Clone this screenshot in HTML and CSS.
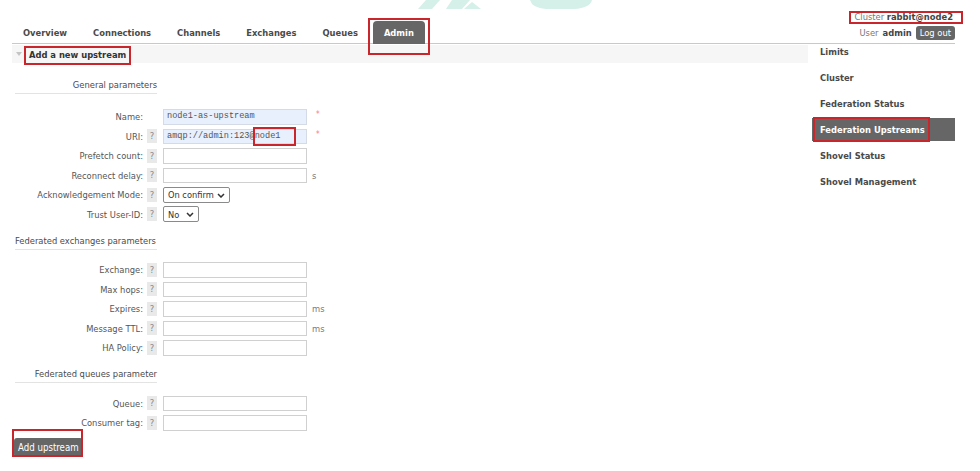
FILE: index.html
```html
<!DOCTYPE html>
<html lang="en">
<head>
<meta charset="utf-8">
<title>RabbitMQ Management - Admin</title>
<link rel="stylesheet" href="styles.css">
</head>
<body>
<div class="page">
  <header class="top">
    <nav class="tabs">
      <a class="tab">Overview</a>
      <a class="tab">Connections</a>
      <a class="tab">Channels</a>
      <a class="tab">Exchanges</a>
      <a class="tab">Queues</a>
      <a class="tab active">Admin</a>
    </nav>
    <div class="login">
      <div class="cluster">Cluster <b>rabbit@node2</b></div>
      <div class="user">User <b>admin</b> <button class="logout">Log out</button></div>
    </div>
  </header>

  <div class="main">
    <section class="content">
      <div class="band"><span class="tri"></span>Add a new upstream</div>
      <div class="form">
        <div class="heading">General parameters</div>
        <div class="row"><span class="label">Name:</span><span class="hcell"></span><span class="field"><span class="inp filled">node1-as-upstream</span><span class="req">*</span></span></div>
        <div class="row"><span class="label">URI:</span><span class="hcell"><span class="help">?</span></span><span class="field"><span class="inp filled">amqp://admin:123@node1</span><span class="req">*</span></span></div>
        <div class="row"><span class="label">Prefetch count:</span><span class="hcell"><span class="help">?</span></span><span class="field"><span class="inp"></span></span></div>
        <div class="row"><span class="label">Reconnect delay:</span><span class="hcell"><span class="help">?</span></span><span class="field"><span class="inp"></span><span class="unit">s</span></span></div>
        <div class="row"><span class="label">Acknowledgement Mode:</span><span class="hcell"><span class="help">?</span></span><span class="field"><span class="selwrap"><select class="sel sel-ack"><option>On confirm</option></select><svg class="chev" width="8" height="5" viewBox="0 0 8 5"><path d="M1 1 L4 4 L7 1" fill="none" stroke="#333" stroke-width="1.5"/></svg></span></span></div>
        <div class="row"><span class="label">Trust User-ID:</span><span class="hcell"><span class="help">?</span></span><span class="field"><span class="selwrap"><select class="sel sel-trust"><option>No</option></select><svg class="chev" width="8" height="5" viewBox="0 0 8 5"><path d="M1 1 L4 4 L7 1" fill="none" stroke="#333" stroke-width="1.5"/></svg></span></span></div>

        <div class="heading heading-ex">Federated exchanges parameters</div>
        <div class="row"><span class="label">Exchange:</span><span class="hcell"><span class="help">?</span></span><span class="field"><span class="inp"></span></span></div>
        <div class="row"><span class="label">Max hops:</span><span class="hcell"><span class="help">?</span></span><span class="field"><span class="inp"></span></span></div>
        <div class="row"><span class="label">Expires:</span><span class="hcell"><span class="help">?</span></span><span class="field"><span class="inp"></span><span class="unit">ms</span></span></div>
        <div class="row"><span class="label">Message TTL:</span><span class="hcell"><span class="help">?</span></span><span class="field"><span class="inp"></span><span class="unit">ms</span></span></div>
        <div class="row"><span class="label">HA Policy:</span><span class="hcell"><span class="help">?</span></span><span class="field"><span class="inp"></span></span></div>

        <div class="heading heading-q">Federated queues parameter</div>
        <div class="row"><span class="label">Queue:</span><span class="hcell"><span class="help">?</span></span><span class="field"><span class="inp"></span></span></div>
        <div class="row"><span class="label">Consumer tag:</span><span class="hcell"><span class="help">?</span></span><span class="field"><span class="inp"></span></span></div>
      </div>
      <button class="submit">Add upstream</button>
    </section>

    <aside class="side">
      <ul class="menu">
        <li><a>Limits</a></li>
        <li><a>Cluster</a></li>
        <li><a>Federation Status</a></li>
        <li class="sel-item"><a>Federation Upstreams</a></li>
        <li><a>Shovel Status</a></li>
        <li><a>Shovel Management</a></li>
      </ul>
    </aside>
  </div>

  <svg class="mark" width="200" height="12" viewBox="410 0 200 12" aria-hidden="true">
    <polygon points="426,0 440,0 432,9 418,9" fill="#d5efe9"/>
    <polygon points="452,0 470,0 462,9 446,9" fill="#d5efe9"/>
    <polygon points="472,2 481,9 464,9" fill="#d5efe9"/>
    <path d="M530 0 H592 Q590 8 574 9 H546 Q532 8 530 0 Z" fill="#d5efe9"/>
  </svg>

  <div class="anno a-cluster"></div>
  <div class="anno a-admin"></div>
  <div class="anno a-band"></div>
  <div class="anno a-uri"></div>
  <div class="anno a-fed"></div>
  <div class="anno a-btn"></div>
</div>
</body>
</html>
```

FILE: styles.css
```css
html, body {
  margin: 0;
  padding: 0;
  background: #fff;
}
body {
  font-family: "DejaVu Sans Condensed", "DejaVu Sans", sans-serif;
  font-stretch: condensed;
  font-size: 9.3px;
  color: #555;
}
.page {
  position: relative;
  width: 943px;
  height: 471px;
  padding: 0 25px 0 12px;
  overflow: hidden;
}

/* header */
.top {
  display: flex;
  justify-content: space-between;
  height: 43px;
  border-bottom: 1px solid #c9c9c9;
}
.tabs {
  display: flex;
  align-self: flex-end;
  margin-bottom: -1px;
}
.tab {
  display: block;
  height: 23px;
  line-height: 23px;
  padding: 0 11px;
  margin-right: 4px;
  font-weight: bold;
  color: #4a4a4a;
}
.tab.active {
  background: #666;
  color: #fff;
  border-radius: 4px 4px 0 0;
}
.login {
  padding-top: 10px;
  text-align: right;
}
.cluster {
  height: 14px;
  line-height: 14px;
  padding-right: 2px;
  color: #777;
}
.cluster b, .user b {
  color: #444;
}
.user {
  margin-top: 2px;
  height: 14px;
  line-height: 14px;
  display: flex;
  align-items: center;
  justify-content: flex-end;
  gap: 4px;
  color: #777;
}
.logout {
  font: inherit;
  height: 14px;
  padding: 0 4px;
  border: none;
  border-radius: 3px;
  background: #666;
  color: #fff;
  line-height: 14px;
}

/* main */
.main {
  display: flex;
}
.content {
  width: 796px;
}
.band {
  margin-top: 1px;
  height: 18px;
  background: #f6f6f6;
  display: flex;
  align-items: center;
  padding-left: 4px;
  font-weight: bold;
  color: #333;
}
.tri {
  width: 0;
  height: 0;
  border-left: 3px solid transparent;
  border-right: 3px solid transparent;
  border-top: 4px solid #c4c4c4;
  margin-right: 7px;
}
.form {
  padding-left: 3px;
}
.heading {
  width: 142px;
  line-height: 11px;
  padding-bottom: 3px;
  border-bottom: 1px solid #e3e3e3;
  text-align: right;
  white-space: nowrap;
  color: #4a4a4a;
  margin-top: 16px;
  margin-bottom: 13px;
}
.heading-ex {
  text-align: left;
  margin-top: 11px;
  margin-bottom: 10px;
}
.heading-q {
  margin-top: 10px;
  margin-bottom: 11px;
}
.row {
  display: grid;
  grid-template-columns: 128px 20px auto;
  align-items: center;
  height: 19.5px;
}
.label {
  text-align: right;
  white-space: nowrap;
  color: #555;
}
.hcell {
  display: flex;
  align-items: center;
}
.help {
  display: inline-block;
  margin-left: 4px;
  width: 10px;
  height: 14px;
  line-height: 14px;
  text-align: center;
  background: #e9e9e9;
  color: #888;
}
.field {
  display: flex;
  align-items: center;
}
.inp {
  box-sizing: border-box;
  width: 144px;
  height: 15.5px;
  border: 1px solid #d0d0d0;
  background: #fff;
  font-family: "Liberation Mono", "DejaVu Sans Mono", monospace;
  font-size: 8.6px;
  line-height: 13.5px;
  padding-left: 3px;
  color: #555;
  white-space: nowrap;
  overflow: hidden;
}
.inp.filled {
  background: #e8f0fe;
  border-color: #d5dbe6;
}
.req {
  color: #f77;
  margin-left: 9px;
  font-size: 8px;
  align-self: flex-start;
  margin-top: 1px;
}
.unit {
  margin-left: 5px;
  color: #777;
}
.selwrap {
  position: relative;
  display: inline-flex;
}
.sel {
  -webkit-appearance: none;
  appearance: none;
  box-sizing: border-box;
  font-family: "DejaVu Sans Condensed", "DejaVu Sans", sans-serif;
  font-stretch: condensed;
  font-size: 9.2px;
  height: 16px;
  padding: 0 0 0 4px;
  border: 1px solid #8a8a8a;
  border-radius: 2px;
  background: #fff;
  color: #333;
}
.chev {
  position: absolute;
  right: 5px;
  top: 6px;
  pointer-events: none;
}
.sel-ack { width: 67px; }
.sel-trust { width: 36px; }
.submit {
  margin: 5px 0 0 2px;
  height: 19px;
  padding: 0 4px;
  border: none;
  border-radius: 3px;
  background: #666;
  color: #fff;
  font: inherit;
  font-size: 9.6px;
}

/* sidebar */
.side {
  width: 147px;
}
.menu {
  list-style: none;
  margin: -4px 0 0;
  padding: 0;
}
.menu li a {
  display: block;
  height: 23px;
  line-height: 23px;
  margin: 0 0 3px 4px;
  padding-left: 8px;
  font-weight: bold;
  color: #4a4a4a;
}
.menu li.sel-item a {
  background: #666;
  color: #fff;
}

/* overlays */
.mark {
  position: absolute;
  left: 410px;
  top: 0;
}
.anno {
  position: absolute;
  box-sizing: border-box;
  border: 2px solid #c8262c;
}
.a-cluster { left: 849px; top: 11px; width: 114px; height: 13px; }
.a-admin { left: 368px; top: 18px; width: 62px; height: 37px; }
.a-band { left: 24px; top: 46px; width: 107px; height: 19px; }
.a-uri { left: 253px; top: 127px; width: 43px; height: 19px; }
.a-fed { left: 813px; top: 117px; width: 117px; height: 25px; }
.a-btn { left: 12px; top: 429px; width: 71px; height: 28px; }
```
